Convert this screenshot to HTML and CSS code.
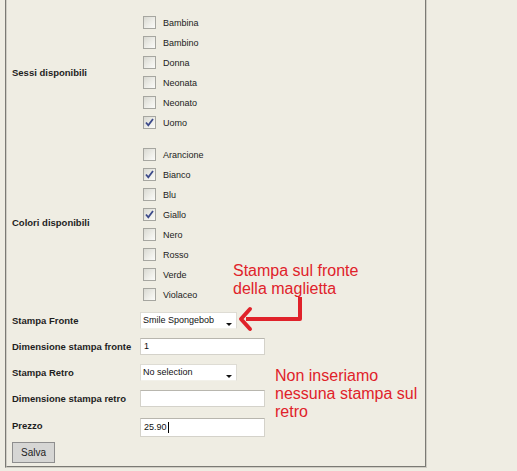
FILE: index.html
```html
<!DOCTYPE html>
<html lang="it">
<head>
<meta charset="utf-8">
<title>Prodotto</title>
<link rel="stylesheet" href="styles.css">
</head>
<body>
<div class="panel">
  <div class="form">
    <div class="label">Sessi disponibili</div>
    <div class="group">
      <div class="cbrow"><span class="cb"></span><span class="cbl">Bambina</span></div>
      <div class="cbrow"><span class="cb"></span><span class="cbl">Bambino</span></div>
      <div class="cbrow"><span class="cb"></span><span class="cbl">Donna</span></div>
      <div class="cbrow"><span class="cb"></span><span class="cbl">Neonata</span></div>
      <div class="cbrow"><span class="cb"></span><span class="cbl">Neonato</span></div>
      <div class="cbrow"><span class="cb checked"><svg viewBox="0 0 13 13" width="13" height="13"><path d="M3 6.5 L5.3 9.3 L10 3" fill="none" stroke="#3c4a8a" stroke-width="1.8"/></svg></span><span class="cbl">Uomo</span></div>
    </div>

    <div class="label">Colori disponibili</div>
    <div class="group group-last">
      <div class="cbrow"><span class="cb"></span><span class="cbl">Arancione</span></div>
      <div class="cbrow"><span class="cb checked"><svg viewBox="0 0 13 13" width="13" height="13"><path d="M3 6.5 L5.3 9.3 L10 3" fill="none" stroke="#3c4a8a" stroke-width="1.8"/></svg></span><span class="cbl">Bianco</span></div>
      <div class="cbrow"><span class="cb"></span><span class="cbl">Blu</span></div>
      <div class="cbrow"><span class="cb checked"><svg viewBox="0 0 13 13" width="13" height="13"><path d="M3 6.5 L5.3 9.3 L10 3" fill="none" stroke="#3c4a8a" stroke-width="1.8"/></svg></span><span class="cbl">Giallo</span></div>
      <div class="cbrow"><span class="cb"></span><span class="cbl">Nero</span></div>
      <div class="cbrow"><span class="cb"></span><span class="cbl">Rosso</span></div>
      <div class="cbrow"><span class="cb"></span><span class="cbl">Verde</span></div>
      <div class="cbrow"><span class="cb"></span><span class="cbl">Violaceo</span></div>
    </div>

    <div class="label row">Stampa Fronte</div>
    <div class="field row"><div class="select"><span>Smile Spongebob</span><span class="arrow"></span></div></div>

    <div class="label row">Dimensione stampa fronte</div>
    <div class="field row"><div class="input">1</div></div>

    <div class="label row">Stampa Retro</div>
    <div class="field row"><div class="select"><span>No selection</span><span class="arrow"></span></div></div>

    <div class="label row">Dimensione stampa retro</div>
    <div class="field row"><div class="input"></div></div>

    <div class="label row row-tall">Prezzo</div>
    <div class="field row row-tall"><div class="input input-tall">25.90<span class="caret"></span></div></div>

    <div class="actions"><div class="button">Salva</div></div>
  </div>

  <div class="note note-front">Stampa sul fronte<br>della maglietta</div>
  <div class="note note-back">Non inseriamo<br>nessuna stampa sul<br>retro</div>
  <svg class="arrow-svg" width="80" height="45" viewBox="0 0 80 45">
    <path d="M62 2 L62 24 L8 24" fill="none" stroke="#e0222a" stroke-width="4" stroke-linejoin="round"/>
    <path d="M12 14 L3 24 L12 34" fill="none" stroke="#e0222a" stroke-width="4" stroke-linecap="round" stroke-linejoin="round"/>
  </svg>
</div>
</body>
</html>
```
FILE: styles.css
```css
html, body {
  margin: 0;
  padding: 0;
  background: #efede3;
}
body {
  width: 517px;
  height: 471px;
  overflow: hidden;
  font-family: "Liberation Sans", Arial, sans-serif;
  color: #1c1c1c;
}
.panel {
  position: relative;
  margin-left: 5px;
  width: 413px;
  height: 460px;
  padding: 6px 0 0 5px;
  border: 2px groove #cfcdc4;
  border-top: none;
}
.form {
  display: grid;
  grid-template-columns: 128px 1fr;
}
.label {
  display: flex;
  align-items: center;
  font-size: 9.5px;
  font-weight: bold;
  color: #1e1e1e;
}
.group {
  padding: 6px 0;
}
.group-last {
  padding-bottom: 3px;
}
.cbrow {
  height: 20px;
  display: flex;
  align-items: center;
}
.cb {
  width: 11px;
  height: 11px;
  margin-left: 3px;
  border: 1px solid #a6a6a0;
  background: linear-gradient(135deg, #d9d9d2 0%, #efefea 60%, #fbfbf9 100%);
  position: relative;
}
.cb svg {
  position: absolute;
  left: -1px;
  top: -1px;
}
.cbl {
  margin-left: 7px;
  font-size: 9px;
  color: #222;
  padding-top: 2px;
}
.row {
  height: 26px;
}
.row-tall {
  height: 29px;
}
.field {
  display: flex;
  align-items: center;
}
.select {
  width: 93px;
  height: 15px;
  border: 1px solid #dedcd4;
  border-bottom-color: #f2f1ea;
  background: #fff;
  display: flex;
  align-items: center;
  justify-content: space-between;
  padding: 0 0 0 2px;
  font-size: 9px;
  color: #111;
  position: relative;
}
.select .arrow {
  width: 0;
  height: 0;
  border-left: 3px solid transparent;
  border-right: 3px solid transparent;
  border-top: 3px solid #111;
  margin: 8px 4px 0 0;
}
.input {
  width: 120px;
  height: 15px;
  border: 1px solid #d4d2ca;
  border-top-color: #b8b6ae;
  background: #fff;
  font-size: 9px;
  line-height: 15px;
  padding-left: 3px;
  color: #111;
  display: flex;
  align-items: center;
}
.input-tall {
  height: 17px;
  margin-top: 3px;
}
.caret {
  display: inline-block;
  width: 1px;
  height: 11px;
  background: #000;
  margin-left: 1px;
}
.actions {
  grid-column: 1 / 3;
  padding-top: 2px;
}
.button {
  width: 41px;
  height: 19px;
  border: 1px solid #8e8e8e;
  background: #d6d6d4;
  font-size: 10px;
  color: #222;
  display: flex;
  align-items: center;
  justify-content: center;
}
.note {
  position: absolute;
  font-size: 16px;
  line-height: 18px;
  color: #e0222a;
  white-space: nowrap;
}
.note-front {
  left: 226px;
  top: 262px;
}
.note-back {
  left: 268px;
  top: 367px;
}
.arrow-svg {
  position: absolute;
  left: 231px;
  top: 295px;
}
```
